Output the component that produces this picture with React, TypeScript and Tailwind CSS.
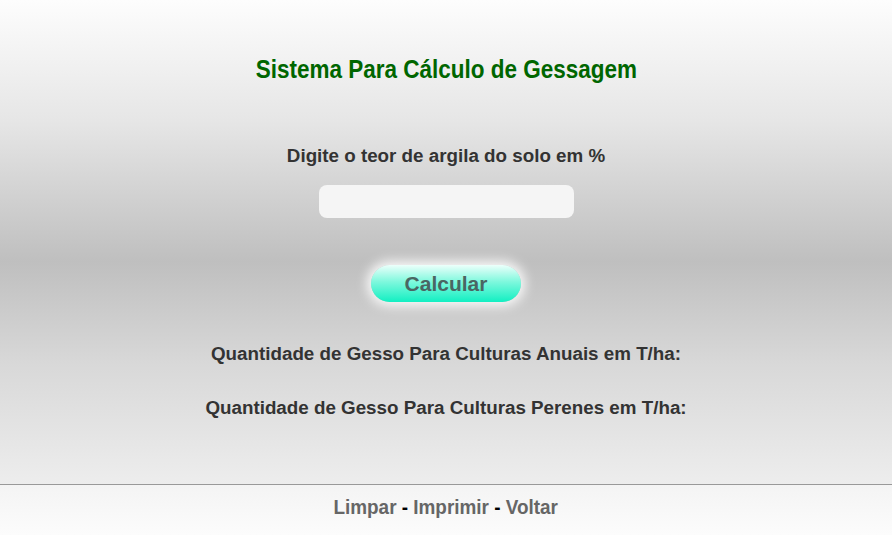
export default function App() {
  return (
    <div className="w-[892px] h-[535px] flex flex-col overflow-hidden font-['Liberation_Sans',Arial,sans-serif]">
      <div className="h-[484px] flex flex-col items-center bg-[linear-gradient(to_bottom,#fdfdfd_0%,#e6e6e6_25%,#bfbfbf_54%,#d8d8d8_75%,#ededed_100%)]">
        <h1 className="mt-[54px] h-[30px] leading-[30px] text-[26px] font-bold text-[#006600] whitespace-nowrap scale-x-[0.865]">
          Sistema Para Cálculo de Gessagem
        </h1>
        <p className="mt-[61px] h-[22px] leading-[22px] text-[18.8px] font-bold text-[#333333]">
          Digite o teor de argila do solo em %
        </p>
        <input
          type="text"
          className="mt-[18px] w-[255px] h-[33px] rounded-[8px] bg-[#f5f5f5] outline-none border-0"
        />
        <button className="mt-[47px] w-[150px] h-[37px] rounded-full bg-[linear-gradient(to_bottom,#ecfffb_0%,#7ff8dd_45%,#12efc2_100%)] shadow-[0_0_12px_4px_rgba(255,255,255,0.9)] text-[21px] font-bold text-[#4a6663]">
          Calcular
        </button>
        <p className="mt-[41px] h-[22px] leading-[22px] text-[18.8px] font-bold text-[#333333]">
          Quantidade de Gesso Para Culturas Anuais em T/ha:
        </p>
        <p className="mt-[32px] h-[22px] leading-[22px] text-[18.8px] font-bold text-[#333333]">
          Quantidade de Gesso Para Culturas Perenes em T/ha:
        </p>
      </div>
      <div className="h-px bg-[#999999]" />
      <div className="flex-1 flex items-center justify-center pb-[6px] bg-[linear-gradient(to_bottom,#f4f4f4,#fcfcfc)]">
        <div className="flex scale-x-[0.9] text-[21px] font-bold whitespace-nowrap">
          <span className="text-[#666666]">Limpar</span>
          <span className="text-black">&nbsp;-&nbsp;</span>
          <span className="text-[#666666]">Imprimir</span>
          <span className="text-black">&nbsp;-&nbsp;</span>
          <span className="text-[#666666]">Voltar</span>
        </div>
      </div>
    </div>
  );
}
